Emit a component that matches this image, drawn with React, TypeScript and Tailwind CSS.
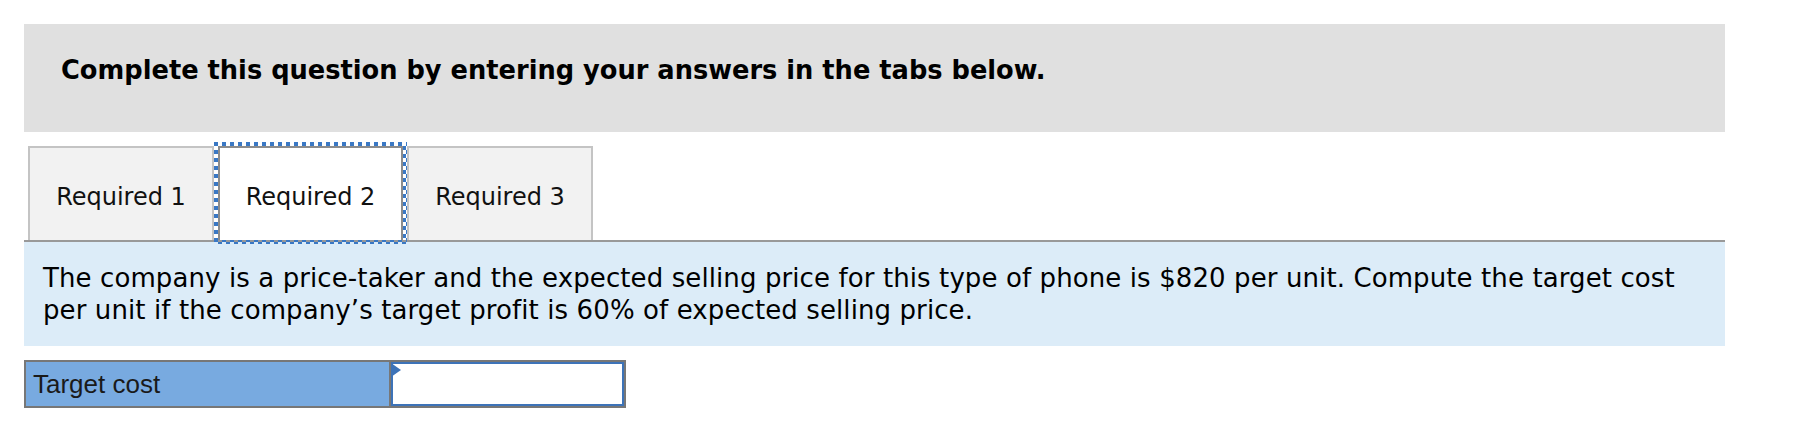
export default function App() {
  const tabs = ["Required 1", "Required 2", "Required 3"];
  const active = 1;
  const tabText = "font-['DejaVu_Sans',sans-serif] text-[24px] text-[#111]";

  return (
    <div className="min-h-[422px] bg-white px-[24px] pt-[24px] text-black">
      <div className="w-[1701px]">
        {/* Instructions header */}
        <div className="h-[108px] bg-[#e0e0e0] pl-[37px] pt-[31px]">
          <h1 className="font-['DejaVu_Sans',sans-serif] text-[25.7px] font-bold leading-[30px]">
            Complete this question by entering your answers in the tabs below.
          </h1>
        </div>

        {/* Tabs */}
        <div className="mt-[10px] flex items-end border-b-2 border-[#999999] pl-[4px]">
          {tabs.map((label, i) =>
            i === active ? (
              // dotted focus ring drawn as a 4px checker frame around the active tab
              <div
                key={label}
                className="-mb-[4px] bg-[repeating-conic-gradient(transparent_0_25%,#3a78c4_0_50%)] bg-[length:8px_8px] p-[4px]"
              >
                <div
                  className={`flex h-[94px] w-[185px] items-center justify-center border-2 border-b-0 border-[#8c8c8c] bg-white pt-[5px] ${tabText}`}
                >
                  {label}
                </div>
              </div>
            ) : (
              <div
                key={label}
                className={`flex h-[94px] w-[186px] items-center justify-center border-2 border-b-0 border-[#c4c4c4] bg-[#f2f2f2] pt-[5px] ${tabText}`}
              >
                {label}
              </div>
            )
          )}
        </div>

        {/* Question */}
        <div className="bg-[#dcecf8] px-[19px] pb-[20px] pt-[20px]">
          <p className="font-['DejaVu_Sans',sans-serif] text-[26px] leading-[32px] tracking-[0.1px]">
            The company is a price-taker and the expected selling price for this type of phone is $820 per unit. Compute the target cost per unit if the company’s target profit is 60% of expected selling price.
          </p>
        </div>

        {/* Answer row */}
        <div className="mt-[14px] flex h-[48px] w-[602px] border-2 border-[#777777]">
          <div className="flex w-[365px] items-center border-r-2 border-[#777777] bg-[#78aae0] pl-[7px] font-['Liberation_Sans',Arial,sans-serif] text-[26px] text-[#1a1a1a]">
            Target cost
          </div>
          <div className="relative flex-1 border-2 border-[#3d73b8] bg-white">
            <span className="absolute left-[-2px] top-[-1px] h-0 w-0 border-y-[7px] border-l-[10px] border-y-transparent border-l-[#3d73b8]" />
            <input className="h-full w-full bg-transparent outline-none" aria-label="Target cost" />
          </div>
        </div>
      </div>
    </div>
  );
}
